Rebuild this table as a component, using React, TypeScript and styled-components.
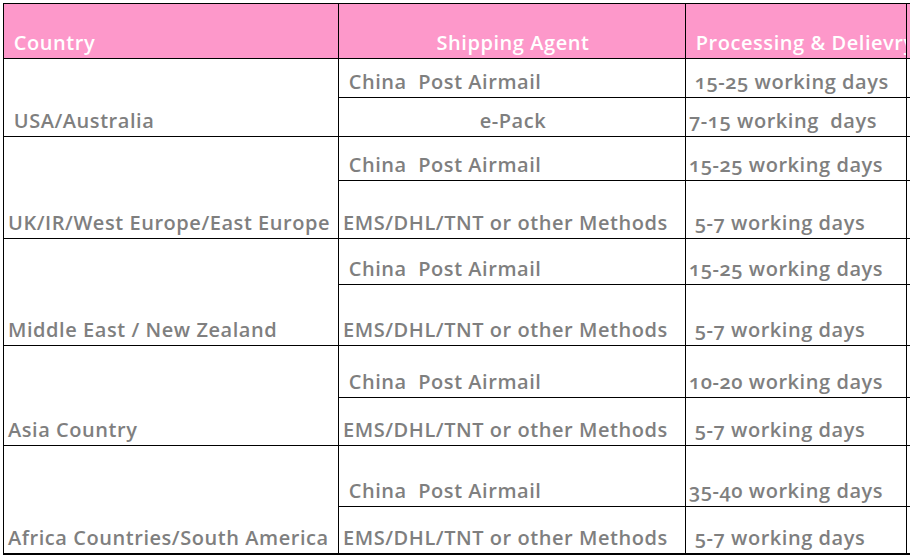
import * as React from "react";
import styled, { createGlobalStyle } from "styled-components";

const GlobalStyles = createGlobalStyle`
  html, body {
    margin: 0;
    padding: 0;
    background: #ffffff;
    overflow: hidden;
  }
  body {
    font-family: "Open Sans", "Liberation Sans", sans-serif;
  }
`;

type SubRow = { agent: string; time: string; height: number; center?: boolean };
type Region = { country: string; rows: SubRow[] };

const regions: Region[] = [
  {
    country: " USA/Australia",
    rows: [
      { agent: " China  Post Airmail", time: " 15-25 working days", height: 39 },
      { agent: "e-Pack", time: "7-15 working  days", height: 39, center: true },
    ],
  },
  {
    country: "UK/IR/West Europe/East Europe",
    rows: [
      { agent: " China  Post Airmail", time: "15-25 working days", height: 44 },
      { agent: "EMS/DHL/TNT or other Methods", time: " 5-7 working days", height: 58 },
    ],
  },
  {
    country: "Middle East / New Zealand",
    rows: [
      { agent: " China  Post Airmail", time: "15-25 working days", height: 46 },
      { agent: "EMS/DHL/TNT or other Methods", time: " 5-7 working days", height: 61 },
    ],
  },
  {
    country: "Asia Country",
    rows: [
      { agent: " China  Post Airmail", time: "10-20 working days", height: 52 },
      { agent: "EMS/DHL/TNT or other Methods", time: " 5-7 working days", height: 48 },
    ],
  },
  {
    country: "Africa Countries/South America",
    rows: [
      { agent: " China  Post Airmail", time: "35-40 working days", height: 61 },
      { agent: "EMS/DHL/TNT or other Methods", time: " 5-7 working days", height: 46 },
    ],
  },
];

const COL1 = 335;
const COL2 = 347;
const COL3 = 221;
const COL4 = 60;

const Page = styled.div`
  padding: 3px 0 0 3px;
  width: 910px;
  height: 555px;
  box-sizing: border-box;
  overflow: hidden;
`;

const Table = styled.div`
  display: flex;
  flex-direction: column;
  width: ${COL1 + COL2 + COL3 + COL4 + 1}px;
  border-top: 1px solid #000;
  border-left: 1px solid #000;
  border-bottom: 3px solid #000;
`;

const HeaderRow = styled.div`
  display: flex;
  height: 55px;
  background: #fd98ca;
`;

const RegionRow = styled.div`
  display: flex;
`;

const SubRows = styled.div`
  display: flex;
  flex-direction: column;
`;

const Line = styled.div<{ $h: number }>`
  display: flex;
  height: ${(p) => p.$h}px;
`;

const Cell = styled.div<{ $w: number; $center?: boolean; $noRight?: boolean; $noBottom?: boolean }>`
  box-sizing: border-box;
  width: ${(p) => p.$w}px;
  flex-shrink: 0;
  display: flex;
  align-items: flex-end;
  justify-content: ${(p) => (p.$center ? "center" : "flex-start")};
  padding: 0 2px 5px 4px;
  border-right: ${(p) => (p.$noRight ? "none" : "1px solid #000")};
  border-bottom: ${(p) => (p.$noBottom ? "none" : "1px solid #000")};
  white-space: pre;
  overflow: hidden;
  font-size: 20px;
  letter-spacing: 0.55px;
  line-height: 1;
  font-weight: 600;
  color: #7f7f7f;
  font-variant-numeric: oldstyle-nums;
`;

const HeadCell = styled(Cell)`
  color: #ffffff;
`;

const CountryCell = styled(Cell)`
  padding-bottom: 5px;
`;

const TimeCell = styled(Cell)`
  padding-left: 3px;
`;

export default function App() {
  return (
    <Page>
      <GlobalStyles />
      <Table>
        <HeaderRow>
          <HeadCell $w={COL1}> Country</HeadCell>
          <HeadCell $w={COL2} $center>
            Shipping Agent
          </HeadCell>
          <HeadCell $w={COL3}> Processing &amp; Delievry</HeadCell>
          <HeadCell $w={COL4} $noRight />
        </HeaderRow>
        {regions.map((r, i) => (
          <RegionRow key={r.country}>
            <CountryCell $w={COL1} $noBottom={i === regions.length - 1}>
              {r.country}
            </CountryCell>
            <SubRows>
              {r.rows.map((s, j) => {
                const last = i === regions.length - 1 && j === r.rows.length - 1;
                return (
                  <Line key={j} $h={s.height}>
                    <Cell $w={COL2} $center={s.center} $noBottom={last}>
                      {s.agent}
                    </Cell>
                    <TimeCell $w={COL3} $noBottom={last}>
                      {s.time}
                    </TimeCell>
                    <Cell $w={COL4} $noRight $noBottom={last} />
                  </Line>
                );
              })}
            </SubRows>
          </RegionRow>
        ))}
      </Table>
    </Page>
  );
}
